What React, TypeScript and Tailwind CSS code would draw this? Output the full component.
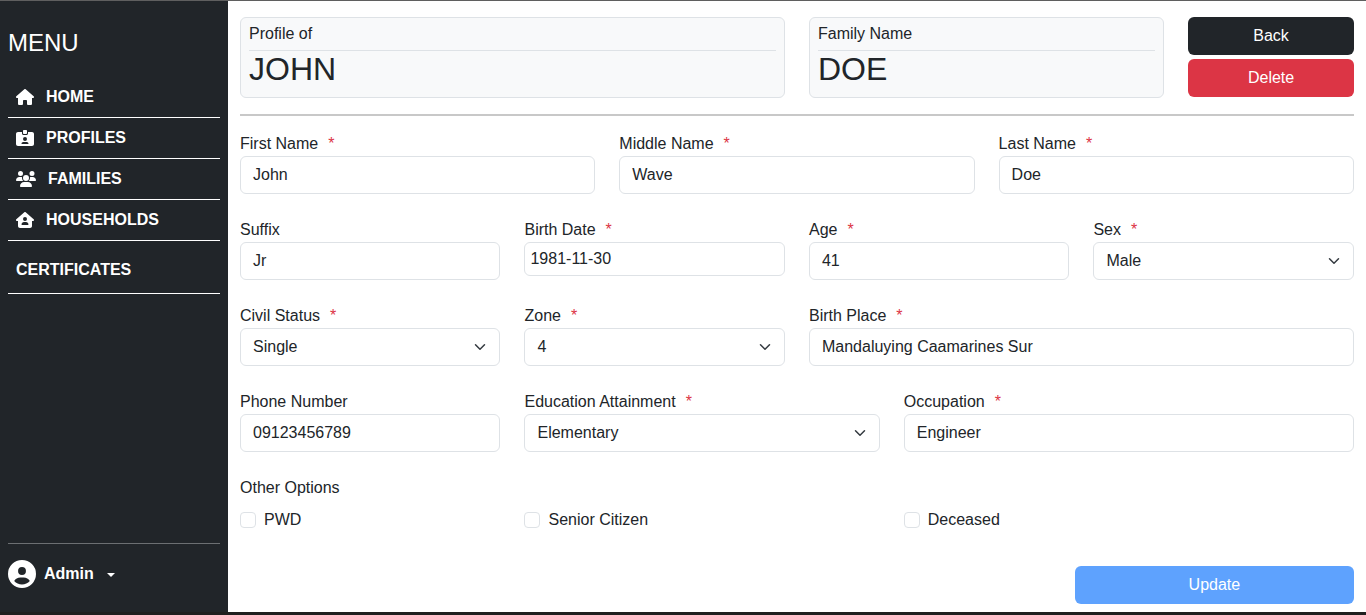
import { FaCircleUser, FaHouse, FaHouseUser, FaIdCardClip, FaUsers } from "react-icons/fa6";
import { ChevronDown } from "lucide-react";
import type { ReactNode } from "react";

function Label({ text, required }: { text: string; required?: boolean }) {
  return (
    <label className="block h-6 leading-6 text-[#212529]">
      {text}
      {required ? <span className="ml-[10px] text-[#dc3545]">*</span> : null}
    </label>
  );
}

const inputClass =
  "flex h-[38px] w-full items-center rounded-md border border-[#dee2e6] bg-white px-3 text-[#212529]";

function Field({
  label,
  value,
  required,
  span,
  select,
  short,
}: {
  label: string;
  value: string;
  required?: boolean;
  span: string;
  select?: boolean;
  short?: boolean;
}) {
  return (
    <div className={span}>
      <Label text={label} required={required} />
      {select ? (
        <div className={`${inputClass} justify-between`}>
          <span>{value}</span>
          <ChevronDown size={18} strokeWidth={2} className="-mr-0.5 text-[#343a40]" />
        </div>
      ) : (
        <div className={`${inputClass} ${short ? "!h-[34px] !px-[5px]" : ""}`}>{value}</div>
      )}
    </div>
  );
}

function NavItem({ icon, text, gap }: { icon?: ReactNode; text: string; gap?: string }) {
  return (
    <a className="flex h-[41px] items-center border-b border-white pl-2 text-white">
      {icon ? <span className={`flex w-5 justify-start ${gap ?? "mr-[10px]"}`}>{icon}</span> : null}
      <span className="font-bold">{text}</span>
    </a>
  );
}

function Sidebar() {
  return (
    <aside className="flex w-[228px] shrink-0 flex-col bg-[#212529] px-2 text-white">
      <div className="mt-[27px] mb-[20px] text-2xl leading-[29px]">MENU</div>
      <nav className="flex flex-col">
        <NavItem icon={<FaHouse size={18} />} text="HOME" />
        <NavItem icon={<FaIdCardClip size={18} />} text="PROFILES" />
        <NavItem icon={<FaUsers size={20} />} text="FAMILIES" gap="mr-[12px]" />
        <NavItem icon={<FaHouseUser size={18} />} text="HOUSEHOLDS" />
        <a className="flex h-[53px] items-center border-b border-white pl-2 pt-[6px] font-bold text-white">
          CERTIFICATES
        </a>
      </nav>
      <div className="mt-auto mb-[24px] border-t border-[#6c6f72] pt-[15px]">
        <div className="flex h-[29px] items-center">
          <FaCircleUser size={28} />
          <span className="ml-2 font-bold">Admin</span>
          <span className="ml-[13px] mt-[2px] h-0 w-0 border-x-[4.8px] border-t-[4.8px] border-x-transparent border-t-white" />
        </div>
      </div>
    </aside>
  );
}

function InfoCard({ label, name, span }: { label: string; name: string; span: string }) {
  return (
    <div className={`${span} h-[81px] rounded-md border border-[#dee2e6] bg-[#f8f9fa] px-2 pt-1 text-[#212529]`}>
      <div className="h-[29px] border-b border-[#dee2e6] leading-6">{label}</div>
      <div className="text-[32px] leading-[36px]">{name}</div>
    </div>
  );
}

function Option({ text, span }: { text: string; span: string }) {
  return (
    <div className={`${span} flex items-center`}>
      <span className="mr-2 h-4 w-4 rounded border border-[#dee2e6] bg-white" />
      <span className="text-[#212529]">{text}</span>
    </div>
  );
}

export default function App() {
  return (
    <div className="flex h-[615px] flex-col overflow-hidden bg-white font-['Liberation_Sans',Arial,sans-serif] text-base">
      <div className="h-px shrink-0 bg-[#5f5f5f]" />
      <div className="flex min-h-0 flex-1">
        <Sidebar />
        <main className="flex-1 pl-3 pr-[12.1px] pt-4">
          <div className="grid grid-cols-12 gap-x-6">
            <InfoCard span="col-span-6" label="Profile of" name="JOHN" />
            <InfoCard span="col-span-4" label="Family Name" name="DOE" />
            <div className="col-span-2 flex flex-col gap-1">
              <button className="h-[38px] rounded-md bg-[#212529] text-white">Back</button>
              <button className="h-[38px] rounded-md bg-[#dc3545] text-white">Delete</button>
            </div>
          </div>
          <hr className="mt-4 mb-4 h-0.5 border-0 bg-[#c8c8c8]" />
          <div className="grid grid-cols-12 gap-x-6 gap-y-6">
            <Field span="col-span-4" label="First Name" value="John" required />
            <Field span="col-span-4" label="Middle Name" value="Wave" required />
            <Field span="col-span-4" label="Last Name" value="Doe" required />
            <Field span="col-span-3" label="Suffix" value="Jr" />
            <Field span="col-span-3" label="Birth Date" value="1981-11-30" required short />
            <Field span="col-span-3" label="Age" value="41" required />
            <Field span="col-span-3" label="Sex" value="Male" required select />
            <Field span="col-span-3" label="Civil Status" value="Single" required select />
            <Field span="col-span-3" label="Zone" value="4" required select />
            <Field span="col-span-6" label="Birth Place" value="Mandaluying Caamarines Sur" required />
            <Field span="col-span-3" label="Phone Number" value="09123456789" />
            <Field span="col-span-4" label="Education Attainment" value="Elementary" required select />
            <Field span="col-span-5" label="Occupation" value="Engineer" required />
          </div>
          <div className="mt-6">
            <Label text="Other Options" />
            <div className="mt-2 grid grid-cols-12 gap-x-6">
              <Option span="col-span-3" text="PWD" />
              <Option span="col-span-4" text="Senior Citizen" />
              <Option span="col-span-5" text="Deceased" />
            </div>
          </div>
          <div className="mt-[34px] flex justify-end">
            <button className="h-[38px] w-[279px] rounded-md bg-[#5ea2fe] text-white">Update</button>
          </div>
        </main>
      </div>
      <div className="h-[3px] shrink-0 bg-[#1f1f1f]" />
    </div>
  );
}
